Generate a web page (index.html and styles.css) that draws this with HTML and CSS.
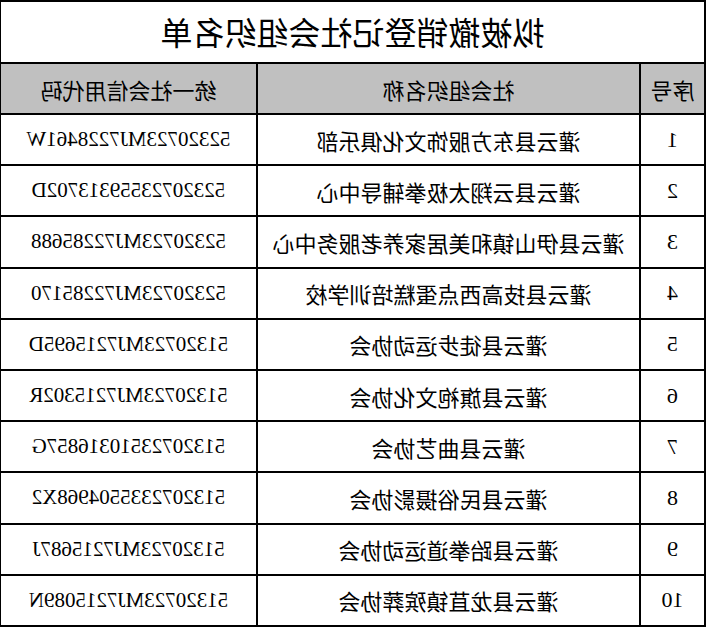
FILE: index.html
```html
<!DOCTYPE html>
<html lang="zh-CN">
<head>
<meta charset="utf-8">
<title>拟被撤销登记社会组织名单</title>
<link rel="stylesheet" href="styles.css">
</head>
<body>
<div class="page">
  <table class="list">
    <colgroup>
      <col class="c-no">
      <col class="c-name">
      <col class="c-code">
    </colgroup>
    <thead>
      <tr class="title-row"><th colspan="3" class="title">拟被撤销登记社会组织名单</th></tr>
      <tr class="head-row"><th>序号</th><th>社会组织名称</th><th>统一社会信用代码</th></tr>
    </thead>
    <tbody>
      <tr><td class="num">1</td><td>灌云县东方服饰文化俱乐部</td><td class="code">52320723MJ7228461W</td></tr>
      <tr><td class="num">2</td><td>灌云县云翔太极拳辅导中心</td><td class="code">52320723559313702D</td></tr>
      <tr><td class="num">3</td><td>灌云县伊山镇和美居家养老服务中心</td><td class="code">52320723MJ72285688</td></tr>
      <tr><td class="num">4</td><td>灌云县技高西点蛋糕培训学校</td><td class="code">52320723MJ72285170</td></tr>
      <tr><td class="num">5</td><td>灌云县徒步运动协会</td><td class="code">51320723MJ7215695D</td></tr>
      <tr><td class="num">6</td><td>灌云县旗袍文化协会</td><td class="code">51320723MJ7215302R</td></tr>
      <tr><td class="num">7</td><td>灌云县曲艺协会</td><td class="code">51320723510316857G</td></tr>
      <tr><td class="num">8</td><td>灌云县民俗摄影协会</td><td class="code">5132072335504968X2</td></tr>
      <tr><td class="num">9</td><td>灌云县跆拳道运动协会</td><td class="code">51320723MJ7215687J</td></tr>
      <tr><td class="num">10</td><td>灌云县龙苴镇殡葬协会</td><td class="code">51320723MJ7215089N</td></tr>
    </tbody>
  </table>
</div>
</body>
</html>
```
FILE: styles.css
```css
html, body {
  margin: 0;
  padding: 0;
  background: #ffffff;
}

.page {
  width: 707px;
  height: 627px;
  box-sizing: border-box;
  padding-left: 1px;
  transform: scaleX(-1);
  transform-origin: 353.5px 0;
}

.list {
  width: 705px;
  border-collapse: collapse;
  table-layout: fixed;
  font-family: "Liberation Serif", "Noto Sans CJK SC", serif;
  color: #000;
}

.c-no { width: 65px; }
.c-name { width: 383px; }
.c-code { width: 257px; }

.list th,
.list td {
  border: 2px solid #000;
  padding: 0;
  text-align: center;
  vertical-align: middle;
  font-weight: normal;
  font-size: 22px;
  line-height: 1;
  white-space: nowrap;
  overflow: hidden;
}

.title-row { height: 62px; }

.list .title {
  font-size: 32px;
  font-family: "Noto Sans CJK SC", sans-serif;
  padding-bottom: 2px;
}

.head-row { height: 51px; }

.list .head-row th {
  background: #c0c0c0;
  font-family: "Noto Sans CJK SC", sans-serif;
}

.list tbody tr { height: 51.2px; }

.list tbody td {
  font-family: "Noto Sans CJK SC", sans-serif;
}

.list tbody td.num {
  font-family: "Liberation Serif", serif;
  font-size: 22px;
}

.list tbody td.code {
  font-family: "Liberation Serif", serif;
  font-size: 21px;
}
```
